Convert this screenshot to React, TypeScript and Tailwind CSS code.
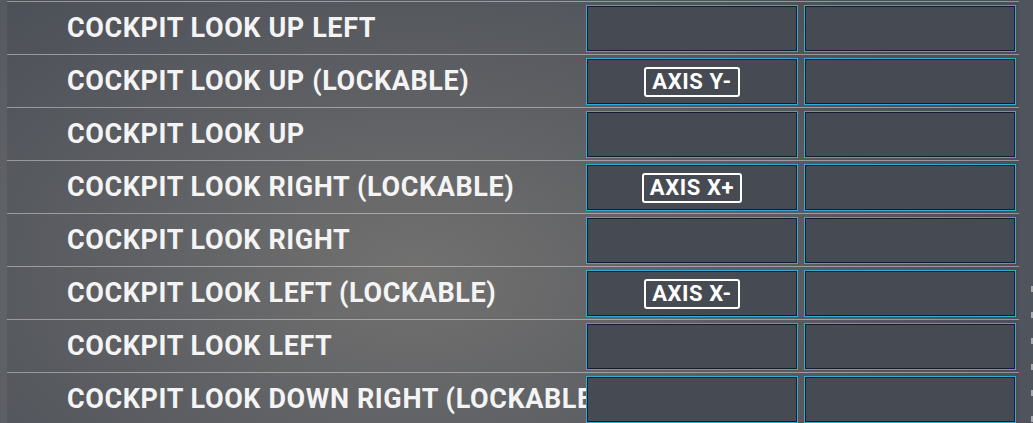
import React from "react";

const rows: { label: string; axis?: string }[] = [
  { label: "COCKPIT LOOK UP LEFT" },
  { label: "COCKPIT LOOK UP (LOCKABLE)", axis: "AXIS Y-" },
  { label: "COCKPIT LOOK UP" },
  { label: "COCKPIT LOOK RIGHT (LOCKABLE)", axis: "AXIS X+" },
  { label: "COCKPIT LOOK RIGHT" },
  { label: "COCKPIT LOOK LEFT (LOCKABLE)", axis: "AXIS X-" },
  { label: "COCKPIT LOOK LEFT" },
  { label: "COCKPIT LOOK DOWN RIGHT (LOCKABLE)" },
];

function Cell({ axis }: { axis?: string }) {
  return (
    <div className="w-[212px] h-[47px] border border-[#34aad6] bg-[#464a52] shadow-[inset_0_0_0_1px_#141c2c] flex items-center justify-center">
      {axis && (
        <div className="h-[30px] px-[6px] border-2 border-white rounded-[3px] flex items-center text-[22px] tracking-[0.6px] font-bold leading-none text-white">
          {axis}
        </div>
      )}
    </div>
  );
}

export default function App() {
  return (
    <div
      className="w-[1033px] h-[423px] overflow-hidden flex bg-[radial-gradient(ellipse_60%_90%_at_40%_65%,#727170_0%,#5d5f63_50%,#4b4f57_100%)] text-[#f4f4f4]"
      style={{ fontFamily: "Roboto, 'Noto Sans', sans-serif" }}
    >
      <div className="w-[7px] h-full bg-white/5" />
      <div className="w-[1012px] flex flex-col pt-[1px]">
        {rows.map((r) => (
          <div key={r.label} className="flex border-t border-white/40 h-[53px] shrink-0">
            <div className="w-[579px] h-[52px] pl-[60px] flex items-center overflow-hidden whitespace-nowrap text-[27px] tracking-[0.6px] font-bold leading-none">
              {r.label}
            </div>
            <div className="mt-[3px] flex gap-[6px]">
              <Cell axis={r.axis} />
              <Cell />
            </div>
          </div>
        ))}
      </div>
      <div className="w-[14px] h-full bg-white/[0.03] flex flex-col items-end pt-[286px] gap-[20px]">
        {[0, 1, 2, 3, 4, 5].map((i) => (
          <div key={i} className="w-[2px] h-[6px] bg-white/50" />
        ))}
      </div>
    </div>
  );
}
